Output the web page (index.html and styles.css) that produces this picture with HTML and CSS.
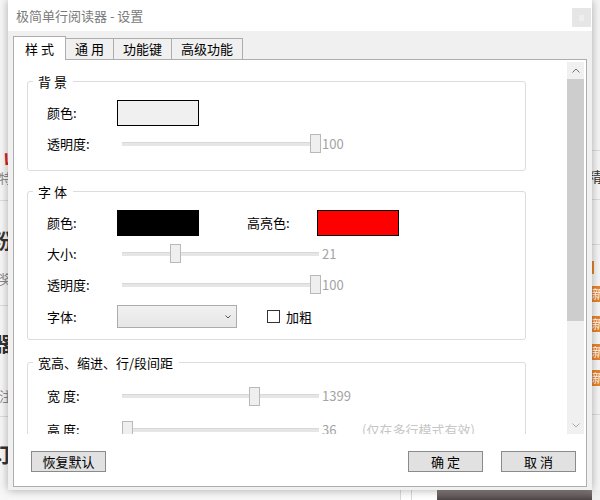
FILE: index.html
```html
<!DOCTYPE html>
<html lang="zh-CN">
<head>
<meta charset="utf-8">
<title>极简单行阅读器 - 设置</title>
<link rel="stylesheet" href="styles.css">
</head>
<body>
<div class="desk">
  <div class="desk-top">
    <div class="strip-left">
      <div class="gap g148"></div>
      <div class="frag f-red">V</div>
      <div class="frag f-gray">特</div>
      <div class="gap g12"></div>
      <div class="sep"></div>
      <div class="gap g26"></div>
      <div class="frag f-bold">粉</div>
      <div class="gap g14"></div>
      <div class="frag f-gray">奖</div>
      <div class="gap g16"></div>
      <div class="sep"></div>
      <div class="gap g24"></div>
      <div class="frag f-bold">器</div>
      <div class="gap g28"></div>
      <div class="frag f-gray">注</div>
      <div class="gap g10"></div>
      <div class="sep"></div>
      <div class="gap g24"></div>
      <div class="frag f-bold">订</div>
    </div>
    <div class="desk-mid"></div>
    <div class="strip-right">
      <div class="gap g150"></div>
      <div class="sep"></div>
      <div class="gap g16"></div>
      <div class="rfrag r-dark">精</div>
      <div class="gap g14"></div>
      <div class="sep"></div>
      <div class="gap g44"></div>
      <div class="sep"></div>
      <div class="gap g16"></div>
      <div class="r-line"></div>
      <div class="gap g12"></div>
      <div class="badge">新</div>
      <div class="gap g14"></div>
      <div class="badge">新</div>
      <div class="gap g12"></div>
      <div class="badge">新</div>
      <div class="gap g10"></div>
      <div class="badge">新</div>
      <div class="gap g28"></div>
      <div class="sep"></div>
    </div>
  </div>
  <div class="desk-bottom">
    <div class="db-light"></div>
    <div class="db-lines"></div>
    <div class="db-dark"></div>
    <div class="db-end"></div>
  </div>
</div>

<div class="window">
  <div class="titlebar">
    <span class="title">极简单行阅读器 - 设置</span>
    <span class="close">
      <svg width="7" height="8" viewBox="0 0 7 8"><path d="M1 2h5M1 4h5M1 6h5" stroke="#f6f6f6" stroke-width="1"/></svg>
    </span>
  </div>
  <div class="body">
    <div class="tabs">
      <div class="tab active w1">样 式</div>
      <div class="tab w2">通 用</div>
      <div class="tab w3">功能键</div>
      <div class="tab w4">高级功能</div>
    </div>
    <div class="panel">
      <div class="scrollwrap">
        <div class="content">
          <fieldset class="group g-bg">
            <legend>背 景</legend>
            <div class="row">
              <span class="label">颜色:</span>
              <span class="swatch sw-light"></span>
            </div>
            <div class="row">
              <span class="label">透明度:</span>
              <span class="slider"><span class="track"></span><span class="thumb" style="left:189px"></span></span>
              <span class="val">100</span>
            </div>
          </fieldset>

          <fieldset class="group g-font">
            <legend>字 体</legend>
            <div class="row">
              <span class="label">颜色:</span>
              <span class="swatch sw-black"></span>
              <span class="label hi">高亮色:</span>
              <span class="swatch sw-red"></span>
            </div>
            <div class="row">
              <span class="label">大小:</span>
              <span class="slider"><span class="track"></span><span class="thumb" style="left:49px"></span></span>
              <span class="val">21</span>
            </div>
            <div class="row">
              <span class="label">透明度:</span>
              <span class="slider"><span class="track"></span><span class="thumb" style="left:189px"></span></span>
              <span class="val">100</span>
            </div>
            <div class="row tall">
              <span class="label">字体:</span>
              <span class="select">
                <svg width="6" height="4" viewBox="0 0 6 4"><path d="M0.5 0.5L3 3L5.5 0.5" fill="none" stroke="#555" stroke-width="1"/></svg>
              </span>
              <span class="checkbox"></span>
              <span class="cb-label">加粗</span>
            </div>
          </fieldset>

          <fieldset class="group g-size">
            <legend>宽高、缩进、行/段间距</legend>
            <div class="row r32">
              <span class="label">宽 度:</span>
              <span class="slider"><span class="track"></span><span class="thumb" style="left:128px"></span></span>
              <span class="val">1399</span>
            </div>
            <div class="row r36">
              <span class="label">高 度:</span>
              <span class="slider"><span class="track"></span><span class="thumb" style="left:1px"></span></span>
              <span class="val fixed">36</span>
              <span class="note">(仅在多行模式有效)</span>
            </div>
          </fieldset>
        </div>
        <div class="scrollbar">
          <div class="sb-btn">
            <svg width="8" height="5" viewBox="0 0 8 5"><path d="M0.5 4.5L4 1L7.5 4.5" fill="none" stroke="#707070" stroke-width="1"/></svg>
          </div>
          <div class="sb-thumb"></div>
          <div class="sb-track"></div>
          <div class="sb-btn">
            <svg width="8" height="5" viewBox="0 0 8 5"><path d="M0.5 0.5L4 4L7.5 0.5" fill="none" stroke="#a8a8a8" stroke-width="1"/></svg>
          </div>
        </div>
      </div>
      <div class="btnrow">
        <button class="btn" type="button">恢复默认</button>
        <span class="btn-spacer"></span>
        <button class="btn" type="button">确 定</button>
        <button class="btn btn-last" type="button">取 消</button>
      </div>
    </div>
  </div>
</div>
</body>
</html>
```

FILE: styles.css
```css
* { box-sizing: border-box; }

body {
  margin: 0;
  width: 600px;
  height: 500px;
  overflow: hidden;
  position: relative;
  font-family: "Noto Sans CJK SC", "Microsoft YaHei", "Noto Sans", sans-serif;
  font-size: 13px;
  color: #000;
  background: #fff;
}

/* ---------- page behind the dialog ---------- */
.desk {
  width: 600px;
  height: 500px;
  display: flex;
  flex-direction: column;
}
.desk-top { display: flex; height: 490px; }
.desk-mid { flex: 1; background: #fff; }

.strip-left {
  width: 8px;
  overflow: hidden;
  display: flex;
  flex-direction: column;
  align-items: flex-end;
  background: #f7f7f7;
}
.strip-right {
  width: 8px;
  overflow: hidden;
  display: flex;
  flex-direction: column;
  align-items: flex-start;
  background: #f6f6f6;
}
.gap { flex: none; width: 8px; }
.g10 { height: 10px; }
.g12 { height: 12px; }
.g14 { height: 14px; }
.g16 { height: 16px; }
.g24 { height: 24px; }
.g26 { height: 26px; }
.g28 { height: 28px; }
.g44 { height: 44px; }
.g148 { height: 148px; }
.g150 { height: 150px; }
.sep { flex: none; width: 8px; height: 1px; background: #dcdcdc; }

.frag {
  flex: none;
  width: 30px;
  text-align: right;
  white-space: nowrap;
  line-height: 20px;
  height: 20px;
  margin-right: -4px;
  overflow: hidden;
}
.f-red { color: #e0201c; font-weight: bold; font-size: 16px; font-style: italic; height: 20px; line-height: 20px; }
.f-gray { color: #888; font-size: 13px; }
.f-bold { color: #333; font-weight: bold; font-size: 20px; height: 28px; line-height: 28px; }

.rfrag {
  flex: none;
  width: 30px;
  margin-left: -4px;
  white-space: nowrap;
  line-height: 18px;
  height: 18px;
}
.r-dark { color: #333; font-size: 14px; }
.r-line { flex: none; width: 2px; height: 13px; background: #e8832c; }
.badge {
  flex: none;
  width: 16px;
  height: 16px;
  margin-left: -2px;
  background: #e8832c;
  color: #fff;
  font-size: 12px;
  line-height: 16px;
  text-align: center;
  border-radius: 2px;
}

.desk-bottom { height: 10px; display: flex; }
.db-light { width: 400px; background: #f7f7f7; }
.db-lines {
  width: 37px;
  background: #fff;
  border-left: 1px solid #dadada;
  box-shadow: inset 10px 0 0 #fff, inset 11px 0 0 #dadada;
}
.db-dark { width: 155px; background: linear-gradient(#8a8080, #4d4545); }
.db-end { flex: 1; background: #eeeeee; }

/* ---------- the dialog window ---------- */
.window {
  position: absolute;
  left: 8px;
  top: 0;
  width: 584px;
  height: 490px;
  background: #f0f0f0;
  box-shadow: 0 0 9px rgba(0, 0, 0, 0.32);
  display: flex;
  flex-direction: column;
}

.titlebar {
  height: 31px;
  flex: none;
  background: #fff;
  display: flex;
  align-items: center;
  justify-content: space-between;
  padding: 0 1px 0 8px;
}
.title {
  color: #7a7a7a;
  font-size: 13px;
  line-height: 16px;
  margin-top: 1px;
}
.close {
  align-self: flex-start;
  margin-top: 8px;
  width: 19px;
  height: 19px;
  background: #e6e6e6;
  display: flex;
  align-items: center;
  justify-content: center;
}

.body {
  flex: 1;
  padding: 5px 5px 3px;
  display: flex;
  flex-direction: column;
}

.tabs {
  height: 23px;
  flex: none;
  display: flex;
  align-items: flex-end;
}
.tab {
  height: 21px;
  border: 1px solid #adadad;
  border-bottom: none;
  background: #f0f0f0;
  margin-left: -1px;
  display: flex;
  align-items: center;
  justify-content: center;
  line-height: 16px;
  font-size: 13px;
}
.tab.active {
  height: 24px;
  margin-left: 0;
  margin-bottom: -1px;
  background: #fff;
  position: relative;
  z-index: 1;
}
.w1 { width: 53px; }
.w2 { width: 49px; }
.w3 { width: 59px; }
.w4 { width: 72px; }

.panel {
  height: 428px;
  flex: none;
  border: 1px solid #adadad;
  background: #fff;
  padding: 2px 2px 0;
  display: flex;
  flex-direction: column;
}

.scrollwrap {
  height: 372px;
  flex: none;
  display: flex;
}
.content {
  flex: 1;
  overflow: hidden;
  padding-left: 11px;
}

/* group boxes */
.group {
  width: 499px;
  margin: 0;
  border: 1px solid #dcdcdc;
  border-radius: 3px;
  padding: 6px 0 11px 0;
  min-width: 0;
}
.group legend {
  margin-left: 5px;
  padding: 0 6px 0 5px;
  height: 19px;
  line-height: 19px;
  font-size: 13px;
}
.g-bg { margin-top: 10px; }
.g-font { margin-top: 11px; padding-bottom: 6px; }
.g-size { margin-top: 13px; padding-top: 8px; }

.row {
  display: flex;
  align-items: center;
  height: 31px;
  padding-left: 19px;
  line-height: 16px;
}
.row.tall { height: 33px; }
.row.r32 { height: 32px; }
.row.r36 { height: 36px; }

.label { width: 70px; flex: none; white-space: nowrap; }
.label.hi { margin-left: 48px; }

.swatch {
  width: 82px;
  height: 26px;
  border: 1px solid #000;
  flex: none;
}
.sw-light { background: #f0f0f0; }
.sw-black { background: #000; }
.sw-red { background: #ff0000; }

.slider {
  position: relative;
  width: 200px;
  height: 19px;
  margin-left: 4px;
  flex: none;
  display: flex;
  align-items: center;
}
.track {
  margin-left: 1px;
  width: 197px;
  height: 4px;
  background: #e6e6e6;
  border-top: 1px solid #d8d8d8;
}
.thumb {
  position: absolute;
  top: 0;
  width: 11px;
  height: 19px;
  background: #efefef;
  border: 1px solid #b9b9b9;
}
.val {
  margin-left: 1px;
  color: #a3a3a3;
  font-size: 13px;
}
.val.fixed { width: 40px; flex: none; }
.note { color: #c6c6c6; font-size: 13px; white-space: nowrap; }

.select {
  width: 120px;
  height: 23px;
  flex: none;
  border: 1px solid #acacac;
  background: linear-gradient(#f1f1f1, #e6e6e6);
  display: flex;
  align-items: center;
  justify-content: flex-end;
  padding-right: 5px;
}
.checkbox {
  width: 13px;
  height: 13px;
  flex: none;
  margin-left: 30px;
  border: 1px solid #333;
  background: #fff;
}
.cb-label { margin-left: 6px; }

/* scrollbar */
.scrollbar {
  width: 17px;
  flex: none;
  display: flex;
  flex-direction: column;
  background: #f0f0f0;
}
.sb-btn {
  height: 17px;
  flex: none;
  display: flex;
  align-items: center;
  justify-content: center;
}
.sb-thumb { height: 242px; flex: none; background: #cdcdcd; }
.sb-track { flex: 1; }

/* buttons */
.btnrow {
  display: flex;
  margin-top: 17px;
  padding: 0 8px 0 15px;
}
.btn-spacer { flex: 1; }
.btn {
  width: 75px;
  height: 21px;
  flex: none;
  margin: 0;
  padding: 0;
  border: 1px solid #8a8a8a;
  background: #e1e1e1;
  font-family: "Noto Sans CJK SC", "Microsoft YaHei", sans-serif;
  font-size: 13px;
  line-height: 16px;
  color: #000;
  display: flex;
  align-items: center;
  justify-content: center;
}
.btn-last { margin-left: 18px; }
```
